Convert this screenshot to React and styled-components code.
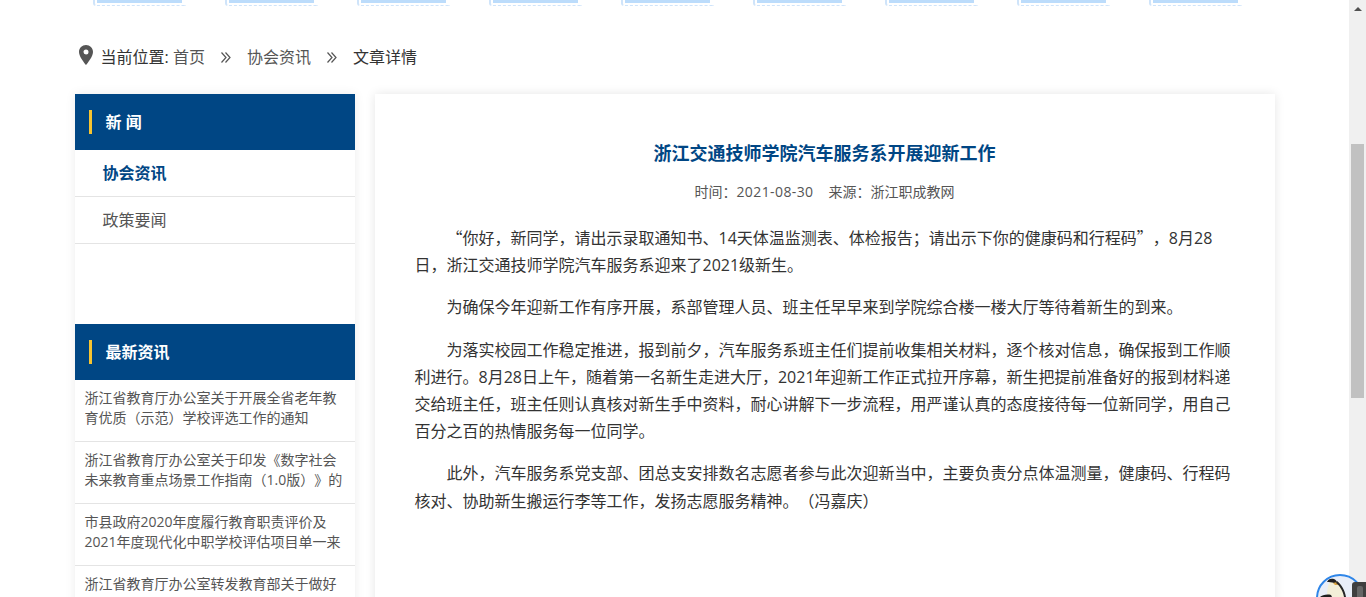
import React from 'react'
import styled, { createGlobalStyle } from 'styled-components'

const GlobalStyle = createGlobalStyle`
  html, body { margin: 0; padding: 0; height: 100%; overflow: hidden; background: #fff; }
  body { font-family: "Open Sans", "Noto Sans CJK SC", sans-serif; text-spacing-trim: space-all; }
  #root { height: 100%; }
`

const latest = [
  '浙江省教育厅办公室关于开展全省老年教育优质（示范）学校评选工作的通知',
  '浙江省教育厅办公室关于印发《数字社会未来教育重点场景工作指南（1.0版）》的',
  '市县政府2020年度履行教育职责评价及2021年度现代化中职学校评估项目单一来',
  '浙江省教育厅办公室转发教育部关于做好',
]

const Chevrons = () => (
  <Sep width="10" height="11" viewBox="0 0 10 11">
    <path fill="none" stroke="#555" strokeWidth="1.2" d="M0.500 0.500L5 5.500L0.500 10.500M4.500 0.500L9 5.500L4.500 10.500" />
  </Sep>
)

const App = () => (
  <>
    <GlobalStyle />
    <Screen>
      <Page>
        <Strip>
          {Array.from({ length: 9 }).map((_, i) => (
            <StripItem key={i} />
          ))}
        </Strip>
        <Crumbs>
          <PinIcon width="14" height="20" viewBox="0 0 14 20">
            <path
              fill="#555"
              fillRule="evenodd"
              d="M7 0C3.100 0 0 3.100 0 7c0 4.600 5.600 11.300 7 13 1.400-1.700 7-8.400 7-13 0-3.900-3.100-7-7-7zm0 4.500A2.500 2.500 0 1 1 7 9.500 2.500 2.500 0 0 1 7 4.500z"
            />
          </PinIcon>
          <CrumbText>当前位置: </CrumbText>
          <CrumbLink>首页</CrumbLink>
          <Chevrons />
          <CrumbLink>协会资讯</CrumbLink>
          <Chevrons />
          <CrumbText>文章详情</CrumbText>
        </Crumbs>
        <Main>
          <Side>
            <SideHead>
              <Mark />
              <HeadLabel>新 闻</HeadLabel>
            </SideHead>
            <NavItem $active>协会资讯</NavItem>
            <NavItem>政策要闻</NavItem>
            <SideGap />
            <SideHead>
              <Mark />
              <HeadLabel>最新资讯</HeadLabel>
            </SideHead>
            {latest.map((t) => (
              <NewsItem key={t}>{t}</NewsItem>
            ))}
          </Side>
          <Article>
            <Title>浙江交通技师学院汽车服务系开展迎新工作</Title>
            <Meta>
              时间：<MetaDate>2021-08-30</MetaDate>来源：浙江职成教网
            </Meta>
            <Para>
              <Quote>“</Quote>你好，新同学，请出示录取通知书、14天体温监测表、体检报告；请出示下你的健康码和行程码<Quote>”</Quote>，8月28日，浙江交通技师学院汽车服务系迎来了2021级新生。
            </Para>
            <Para>为确保今年迎新工作有序开展，系部管理人员、班主任早早来到学院综合楼一楼大厅等待着新生的到来。</Para>
            <Para>为落实校园工作稳定推进，报到前夕，汽车服务系班主任们提前收集相关材料，逐个核对信息，确保报到工作顺利进行。8月28日上午，随着第一名新生走进大厅，2021年迎新工作正式拉开序幕，新生把提前准备好的报到材料递交给班主任，班主任则认真核对新生手中资料，耐心讲解下一步流程，用严谨认真的态度接待每一位新同学，用自己百分之百的热情服务每一位同学。</Para>
            <Para>此外，汽车服务系党支部、团总支安排数名志愿者参与此次迎新当中，主要负责分点体温测量，健康码、行程码核对、协助新生搬运行李等工作，发扬志愿服务精神。（冯嘉庆）</Para>
          </Article>
        </Main>
      </Page>
      <Scrollbar>
        <Arrow />
        <Thumb />
      </Scrollbar>
      <Avatar>
        <svg width="44" height="21" viewBox="0 0 44 21">
          <path fill="#f3efd8" d="M9 21c0-8 1-14 5-17 4-1 8 3 10 8 1 3 2 6 2 9z" />
          <path fill="#1f1f1f" d="M9 6c1-3 4-4 7-3 2 1 3 2 3 4l-3 0c-2-1-5-1-7-1z" />
          <path fill="#d9a441" d="M15 7l4-1 1 3-3 0z" />
          <path fill="#262626" d="M19 5c4 3 8 9 9 16h-2c-1-6-4-11-8-14z" />
          <path fill="#1f1f1f" d="M2 21c2-2 7-3 11-2l1 2z" />
        </svg>
      </Avatar>
      <ToolTab />
    </Screen>
  </>
)

export default App

const Screen = styled.div`
  position: relative;
  display: flex;
  width: 1366px;
  height: 597px;
  overflow: hidden;
`

const Page = styled.div`
  width: 1349px;
  flex-shrink: 0;
  display: flex;
  flex-direction: column;
  align-items: center;
`

const Strip = styled.div`
  height: 8px;
  flex-shrink: 0;
  display: flex;
  gap: 39px;
  align-self: flex-start;
  margin-left: 93px;
`

const StripItem = styled.div`
  width: 93px;
  height: 6px;
  flex-shrink: 0;
  box-sizing: border-box;
  border-left: 2px solid #cfe4fa;
  border-bottom: 1px dashed #cfe4fa;
  border-radius: 0 0 0 3px;
  background: linear-gradient(#bcdcfb, #bcdcfb) no-repeat 2px 0 / 85px 3px;
`

const Crumbs = styled.div`
  width: 1200px;
  height: 86px;
  flex-shrink: 0;
  padding: 35px 0 0 4px;
  box-sizing: border-box;
  display: flex;
  align-items: flex-start;
  font-size: 16px;
  line-height: 28px;
  color: #333;
`

const PinIcon = styled.svg`
  margin: 2px 8px 0 0;
  flex-shrink: 0;
`

const CrumbText = styled.span`
  color: #333;
  white-space: pre;
`

const CrumbLink = styled.span`
  color: #555;
`

const Sep = styled.svg`
  margin: 9px 16px 0;
  flex-shrink: 0;
`

const Main = styled.div`
  width: 1200px;
  flex-shrink: 0;
  display: flex;
  gap: 20px;
  align-items: flex-start;
`

const Side = styled.aside`
  width: 280px;
  flex-shrink: 0;
  background: #fff;
  box-shadow: 0 0 10px rgba(0, 0, 0, 0.08);
`

const SideHead = styled.div`
  height: 56px;
  background: #004684;
  color: #fff;
  display: flex;
  align-items: center;
  padding-left: 14px;
`

const HeadLabel = styled.span`
  font-size: 16px;
  font-weight: 700;
  padding-bottom: 2px;
`

const Mark = styled.i`
  width: 3px;
  height: 24px;
  background: #f7c431;
  margin-right: 14px;
`

const NavItem = styled.div`
  height: 46px;
  line-height: 46px;
  padding-left: 28px;
  font-size: 16px;
  font-weight: ${(p) => (p.$active ? 700 : 400)};
  color: ${(p) => (p.$active ? '#004684' : '#555')};
  border-bottom: 1px solid #e4e4e4;
`

const SideGap = styled.div`
  height: 80px;
`

const NewsItem = styled.div`
  height: 53px;
  padding: 8px 10px 0;
  border-bottom: 1px solid #e4e4e4;
  font-size: 14px;
  line-height: 20px;
  color: #555;
`

const Article = styled.article`
  width: 900px;
  height: 640px;
  flex-shrink: 0;
  box-sizing: border-box;
  padding: 45px 40px 0;
  background: #fff;
  box-shadow: 0 0 10px rgba(0, 0, 0, 0.1);
`

const Title = styled.h1`
  margin: 0;
  text-align: center;
  color: #004684;
  font-size: 18px;
  line-height: 28px;
  font-weight: 700;
`

const Meta = styled.div`
  margin: 13px 0 20px;
  text-align: center;
  color: #555;
  font-size: 14px;
  line-height: 24px;
`

const MetaDate = styled.span`
  letter-spacing: 0.4px;
  margin-right: 15px;
`

const Para = styled.p`
  margin: 0 0 15px;
  text-indent: 32px;
  color: #333;
  font-size: 16px;
  line-height: 27.2px;
`

const Quote = styled.span`
  font-family: "Noto Sans CJK SC", sans-serif;
`

const Scrollbar = styled.div`
  width: 17px;
  height: 597px;
  flex-shrink: 0;
  background: #f0f0f0;
  position: relative;
`

const Arrow = styled.div`
  position: absolute;
  top: 7px;
  left: 5px;
  border-left: 4px solid transparent;
  border-right: 4px solid transparent;
  border-bottom: 4px solid #505050;
`

const Thumb = styled.div`
  position: absolute;
  top: 144px;
  left: 2px;
  width: 13px;
  height: 254px;
  background: #c1c1c1;
`

const Avatar = styled.div`
  position: absolute;
  left: 1316px;
  top: 574px;
  width: 48px;
  height: 48px;
  box-sizing: border-box;
  border: 2px solid #2f86e8;
  border-radius: 50%;
  background: #e9eef8;
  overflow: hidden;

  svg {
    display: block;
  }
`

const ToolTab = styled.div`
  position: absolute;
  left: 1352px;
  top: 582px;
  width: 14px;
  height: 15px;
  border-radius: 3px 0 0 0;
  background: #3f3f3f;

  &::after {
    content: '';
    position: absolute;
    left: 5px;
    top: 4px;
    width: 6px;
    height: 11px;
    border-radius: 2px 2px 0 0;
    background: #666;
  }
`
